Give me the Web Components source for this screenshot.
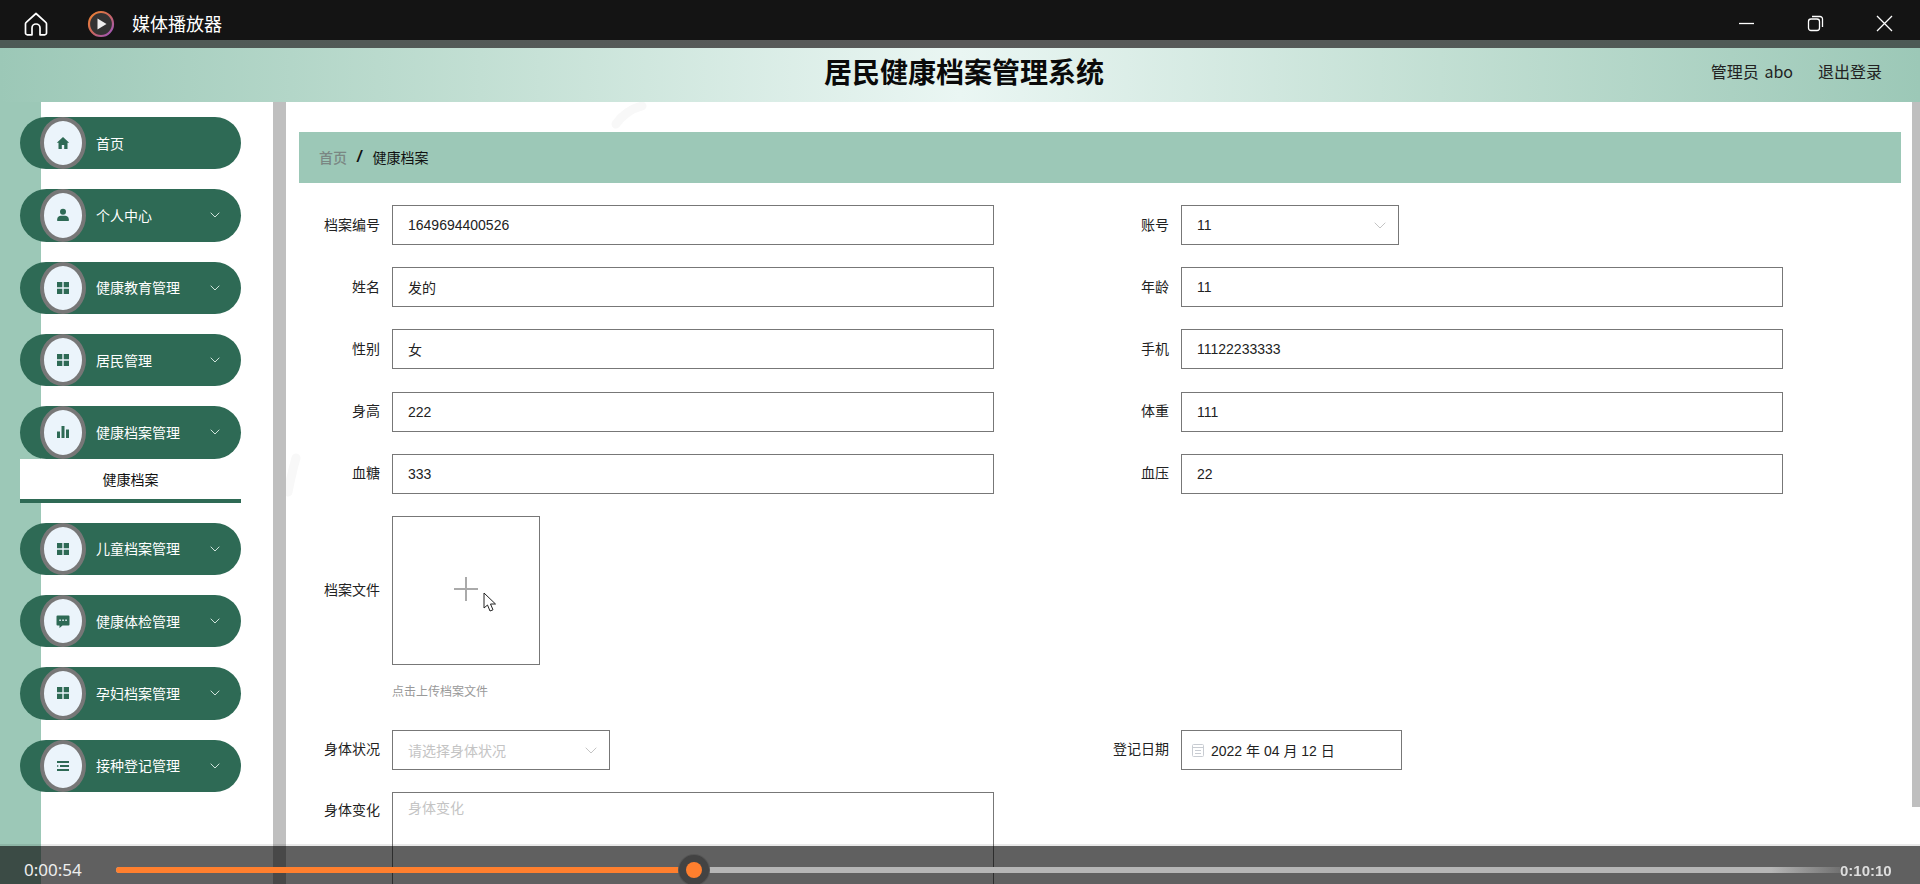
<!DOCTYPE html>
<html lang="zh"><head><meta charset="utf-8"><title>媒体播放器</title>
<style>
html,body{margin:0;height:884px;overflow:hidden;background:#fff}
body{font-family:"Liberation Sans","Noto Sans CJK SC",sans-serif;font-size:14px;color:#222}
</style></head><body>
<x-app>
  <x-titlebar slot="top">媒体播放器</x-titlebar>
  <x-header slot="top" title="居民健康档案管理系统">
    <span>管理员 abo</span><span>退出登录</span>
  </x-header>
  <x-sidebar slot="side">
    <x-menu-item icon="home">首页</x-menu-item>
    <x-menu-item icon="user" chevron>个人中心</x-menu-item>
    <x-menu-item icon="grid" chevron>健康教育管理</x-menu-item>
    <x-menu-item icon="grid" chevron>居民管理</x-menu-item>
    <x-menu-group>
      <x-menu-item icon="bars" chevron>健康档案管理</x-menu-item>
      <x-submenu-item>健康档案</x-submenu-item>
    </x-menu-group>
    <x-menu-item icon="grid" chevron>儿童档案管理</x-menu-item>
    <x-menu-item icon="chat" chevron>健康体检管理</x-menu-item>
    <x-menu-item icon="grid" chevron>孕妇档案管理</x-menu-item>
    <x-menu-item icon="list" chevron>接种登记管理</x-menu-item>
  </x-sidebar>
  <x-main slot="main">
    <x-breadcrumb home="首页">健康档案</x-breadcrumb>
    <x-form>
      <x-field label="档案编号"><x-input>1649694400526</x-input></x-field>
      <x-field label="账号"><x-input select w="218">11</x-input></x-field>
      <x-field label="姓名"><x-input>发的</x-input></x-field>
      <x-field label="年龄"><x-input>11</x-input></x-field>
      <x-field label="性别"><x-input>女</x-input></x-field>
      <x-field label="手机"><x-input>11122233333</x-input></x-field>
      <x-field label="身高"><x-input>222</x-input></x-field>
      <x-field label="体重"><x-input>111</x-input></x-field>
      <x-field label="血糖"><x-input>333</x-input></x-field>
      <x-field label="血压"><x-input>22</x-input></x-field>
      <x-upload label="档案文件" hint="点击上传档案文件"></x-upload>
      <x-field label="身体状况"><x-input select placeholder w="218">请选择身体状况</x-input></x-field>
      <x-field label="登记日期"><x-input date w="221">2022 年 04 月 12 日</x-input></x-field>
      <x-field label="身体变化" top><x-input area placeholder>身体变化</x-input></x-field>
    </x-form>
  </x-main>
  <x-player slot="over" time="0:00:54" end="0:10:10"></x-player>
</x-app>
<script>
const CJK='"Noto Sans CJK SC","Liberation Sans",sans-serif';
function def(name,html){
  customElements.define(name,class extends HTMLElement{
    constructor(){super();this.attachShadow({mode:'open'});}
    connectedCallback(){
      if(this.shadowRoot.childElementCount)return;
      this.shadowRoot.innerHTML=typeof html==='function'?html(this):html;
    }
  });
}
def('x-app',`<style>
:host{display:flex;flex-direction:column;position:relative;width:1920px;height:884px;overflow:hidden}
.body{display:flex;flex:1;min-height:0}
</style><slot name="top"></slot><div class="body"><slot name="side"></slot><slot name="main"></slot></div><slot name="over"></slot>`);
def('x-titlebar',`<style>
:host{display:block;flex:none}
.bar{box-sizing:border-box;height:40px;padding-top:7px;background:#141414;display:flex;align-items:center;color:#fff;font:18px ${CJK}}
.home{margin-left:23px;width:26px;height:26px}
.play{margin-left:38px;width:28px;height:28px}
.t{margin-left:17px;margin-top:-1px}
.ctl{margin-left:auto;display:flex;align-items:center;padding-right:27px;gap:52px}
.ctl svg{width:17px;height:17px;display:block}
.strip{height:8px;background:linear-gradient(90deg,#4d5a55,#5a5a5a 50%,#4d5a55)}
</style><div class="bar">
<svg class="home" viewBox="0 0 26 26" fill="none" stroke="#fff" stroke-width="1.7" stroke-linejoin="round"><path d="M13 2.500 3.200 11.300a2 2 0 0 0-.7 1.500V22a1.800 1.800 0 0 0 1.800 1.800H9V17a4 4 0 0 1 8 0v6.800h4.700a1.800 1.800 0 0 0 1.800-1.800v-9.200a2 2 0 0 0-.7-1.500Z"/></svg>
<svg class="play" viewBox="0 0 28 28"><defs><linearGradient id="g" x1="0" y1="0" x2="1" y2="1"><stop offset="0" stop-color="#f2852f"/><stop offset=".5" stop-color="#c9665f"/><stop offset="1" stop-color="#9a54c8"/></linearGradient></defs><circle cx="14" cy="14" r="12" fill="#333" stroke="url(#g)" stroke-width="2.200"/><path d="M10.500 8.500v11l9-5.500Z" fill="#eee"/></svg>
<span class="t"><slot></slot></span>
<div class="ctl">
<svg viewBox="0 0 17 17" stroke="#fff" fill="none" stroke-width="1.300"><path d="M1 8.500h15"/></svg>
<svg viewBox="0 0 17 17" stroke="#fff" fill="none" stroke-width="1.300"><rect x="1.500" y="4" width="11" height="11.500" rx="2.500"/><path d="M5 1.500h8a2.500 2.500 0 0 1 2.500 2.500v8"/></svg>
<svg viewBox="0 0 17 17" stroke="#fff" fill="none" stroke-width="1.300"><path d="M1 1l15 15M16 1 1 16"/></svg>
</div></div><div class="strip"></div>`);
def('x-header',h=>`<style>
:host{display:block;flex:none}
.h{box-sizing:border-box;height:54px;padding-bottom:8px;position:relative;display:flex;align-items:center;justify-content:flex-end;gap:25px;padding-right:38px;color:#222;font:16px ${CJK};word-spacing:2px;
background:linear-gradient(90deg,#9cc8b7 0,#c2dfd3 25%,#eaf6f3 50%,#c2dfd3 75%,#9cc8b7 100%)}
h1{position:absolute;left:0;right:0;top:0;margin:0;padding-left:8px;text-align:center;font:700 28px/47px ${CJK};color:#0a0a0a}
</style><div class="h"><h1>${h.getAttribute('title')}</h1><slot></slot></div>`);
def('x-sidebar',`<style>
:host{display:flex;flex-direction:column;gap:20px;box-sizing:border-box;flex:none;width:286px;padding:15px 32px 0 20px;
background:linear-gradient(90deg,#9cc8b7 41px,#fff 41px);border-right:13px solid #bfbfbf}
</style><slot></slot>`);
const ICONS={
home:'<path d="M7 1 .8 6.800h1.700V13h3.300V9h2.400v4h3.300V6.800h1.700Z"/>',
user:'<circle cx="7" cy="3.700" r="3"/><path d="M1.200 13v-1.800C1.200 9 3 7.800 4.800 7.800h4.400c1.800 0 3.600 1.200 3.600 3.400V13Z"/>',
grid:'<path d="M1 1h5.300v5.300H1zM7.700 1H13v5.300H7.700zM1 7.700h5.300V13H1zM7.700 7.700H13V13H7.700z"/>',
bars:'<path d="M1 6.500h3V13H1zM5.500 1h3v12h-3zM10 4.500h3V13h-3z"/>',
chat:'<path fill-rule="evenodd" d="M1.500 1.500h11a1 1 0 0 1 1 1v8a1 1 0 0 1-1 1H6.500L3.500 14v-2.500h-2a1 1 0 0 1-1-1v-8a1 1 0 0 1 1-1ZM3.300 5.500v1.600h1.500V5.500Zm3 0v1.600h1.500V5.500Zm3 0v1.600h1.500V5.500Z"/>',
list:'<path d="M1 2h12v2H1zM4 6h9v2H4zM1 6l2 1-2 1zM1 10h12v2H1z"/>'};
def('x-menu-item',h=>`<style>
:host{display:block;flex:none}
.i{height:52.330px;background:#2e6a55;border-radius:27px;display:flex;align-items:center;padding-left:20px;color:#fff;font:14px ${CJK}}
.r{box-sizing:border-box;flex:none;width:46px;height:100%;border:4px solid #777;border-radius:50%;background:#ebf4fb;display:flex;align-items:center;justify-content:center;margin-right:10px}
.r svg{width:14px;height:14px;fill:#2e6a55}
.l{margin-top:-1px}
.c{margin-left:auto;margin-right:21px;width:10px;height:6px}
</style><div class="i"><span class="r"><svg viewBox="0 0 14 14">${ICONS[h.getAttribute('icon')]}</svg></span><span class="l"><slot></slot></span>
${h.hasAttribute('chevron')?'<svg class="c" viewBox="0 0 10 6" fill="none" stroke="#cfe3db" stroke-width="1"><path d="M.7.7 5 5 9.300.7"/></svg>':''}</div>`);
def('x-menu-group',`<style>:host{display:block;flex:none}</style><slot></slot>`);
def('x-submenu-item',`<style>
:host{display:block;box-sizing:border-box;height:44px;background:#fff;border-bottom:4px solid #2e6a55;color:#111;text-align:center;font:14px/40px ${CJK}}
</style><slot></slot>`);
def('x-main',`<style>
:host{display:block;position:relative;flex:1;min-width:0;box-sizing:border-box;padding:30px 19px 0 13px;overflow:hidden;background:#fff}
.bar{position:absolute;top:0;right:0;width:8px;height:705px;background:#bfbfbf}
.wm{position:absolute;left:0;top:0;pointer-events:none}
.c{position:relative}
</style><svg class="wm" width="1626" height="780" fill="none" stroke="#f8f8f8" stroke-width="9" stroke-linecap="round"><path d="M330 22q10-14 26-18"/><path d="M520 74q10-6 26-4"/><path d="M2 390q4-20 8-34"/><path d="M1010 42q20-8 40-6"/></svg>
<div class="bar"></div><div class="c"><slot></slot></div>`);
def('x-breadcrumb',h=>`<style>
:host{display:flex;align-items:center;box-sizing:border-box;height:51px;padding:0 0 2px 20px;background:#9cc8b7;margin-bottom:22px;font:14px ${CJK};color:#111}
.h{color:#7a8783;font-weight:500}
.s{font:italic 700 16px "Liberation Sans",sans-serif;margin:0 11px 0 10px;color:#111}
</style><span class="h">${h.getAttribute('home')}</span><span class="s">/</span><slot></slot>`);
def('x-form',`<style>
:host{display:grid;grid-template-columns:789px 1fr;row-gap:22.200px}
</style><slot></slot>`);
def('x-field',h=>`<style>
:host{display:flex;gap:12px;align-items:${h.hasAttribute('top')?'flex-start':'center'}}
label{width:81px;flex:none;text-align:right;font:14px/${h.hasAttribute('top')?'34px':'1.2'} ${CJK};color:#222;${h.hasAttribute('top')?'':'margin-top:-2px;'}}
</style><label>${h.getAttribute('label')}</label><slot></slot>`);
def('x-input',h=>{
 const w=h.getAttribute('w')||602,area=h.hasAttribute('area'),ph=h.hasAttribute('placeholder'),date=h.hasAttribute('date');
 return `<style>
:host{display:block;flex:none}
.b{box-sizing:border-box;width:${w}px;height:${area?'130px':'40px'};border:1px solid #777;background:#fff;display:flex;align-items:${area?'flex-start':'center'};padding:${area?'4px':'0'} 0 0 ${date?'10px':'15px'};font-size:14px;color:${ph?'#c4c4c4':'#222'};position:relative;${area?'line-height:22px;':''}font-family:"Liberation Sans","Noto Sans CJK SC",sans-serif}
.ch{position:absolute;right:12px;top:16px;width:12px;height:7px}
.cal{width:12px;height:14px;margin-right:7px;flex:none}
</style><div class="b">${date?'<svg class="cal" viewBox="0 0 12 14" fill="none" stroke="#c8ccd2"><rect x=".5" y="1.500" width="11" height="12" rx="1"/><path d="M.5 4.500h11M3 7.500h6M3 10.500h6"/></svg>':''}<slot></slot>${h.hasAttribute('select')?'<svg class="ch" viewBox="0 0 12 7" fill="none" stroke="#c4c4c4"><path d="M.7.7 6 6 11.300.7"/></svg>':''}</div>`;
});
def('x-upload',h=>`<style>
:host{display:block;grid-column:1 / -1}
.r{display:flex;gap:12px;align-items:center}
label{width:81px;text-align:right;font:14px/1.2 ${CJK};color:#222;margin-top:-3px}
.box{box-sizing:border-box;width:148px;height:149px;padding-bottom:3px;border:1px solid #777;background:#fff;position:relative;display:flex;align-items:center;justify-content:center}
.plus{width:24px;height:24px}
.cur{position:absolute;left:90px;top:75px;width:14px;height:20px}
.hint{margin:17px 0 8.500px 93px;height:17px;font:12px/17px ${CJK};color:#999}
</style><div class="r"><label>${h.getAttribute('label')}</label><div class="box"><svg class="plus" viewBox="0 0 24 24" stroke="#aaa" stroke-width="2"><path d="M0 12h24M12 0v24"/></svg><svg class="cur" viewBox="0 0 14 20" fill="#fff" stroke="#222" stroke-width="1"><path d="M1 1v15l3.500-3 2.500 6 3-1.200-2.500-5.800H12.500Z"/></svg></div></div><div class="hint">${h.getAttribute('hint')}</div>`);
def('x-player',h=>`<style>
:host{display:block;position:absolute;left:0;right:0;bottom:0}
.line{height:2px;background:rgba(0,0,0,.09)}
.p{box-sizing:border-box;height:38px;padding-top:9px;background:rgba(0,0,0,.625);display:flex;align-items:center;color:#eee;font:17px "Noto Sans","Liberation Sans",sans-serif}
.t{width:92px;margin-left:24px;flex:none}
.tr{position:relative;flex:1;height:6px;background:linear-gradient(90deg,#b6b6b6 96%,rgba(182,182,182,.2) 100%);border-radius:3px 0 0 3px}
.f{position:absolute;left:0;top:0;height:6px;width:578px;background:#ff7f2e;border-radius:3px 0 0 3px}
.k{position:absolute;left:563px;top:-12px;width:30px;height:30px;box-sizing:border-box;border-radius:50%;background:#434343;border:7px solid #434343;box-shadow:0 0 0 1px #555}
.k i{display:block;width:16px;height:16px;border-radius:50%;background:#ff7f2e}
.e{width:60px;margin:2px 20px 0 0;flex:none;font:700 15px "Liberation Sans",sans-serif;filter:blur(.7px);color:#ddd}
</style><div class="line"></div><div class="p"><span class="t">${h.getAttribute('time')}</span><div class="tr"><div class="f"></div><div class="k"><i></i></div></div><span class="e">${h.getAttribute('end')}</span></div>`);
</script>
</body></html>
